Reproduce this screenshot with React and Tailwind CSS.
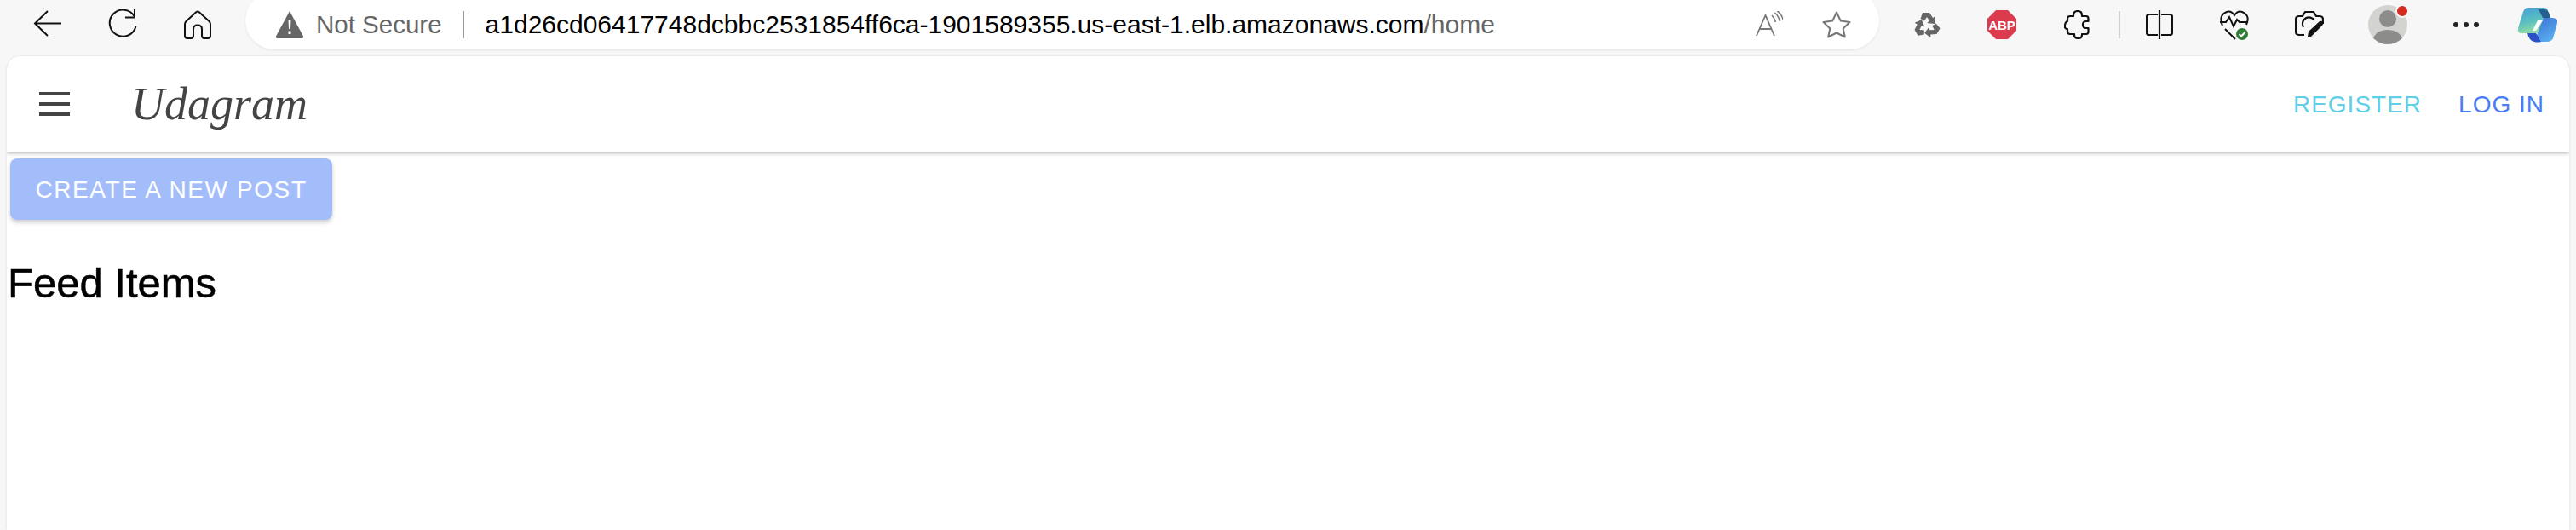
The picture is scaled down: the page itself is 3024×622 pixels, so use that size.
function Back() {
  return (
    <svg width="34" height="34" viewBox="0 0 34 34" fill="none" stroke="#111" strokeWidth="2">
      <path d="M33 15.500H2M17 1 2 15.500 17 30" />
    </svg>
  );
}

function Reload() {
  return (
    <svg width="34" height="38" viewBox="0 0 34 38" fill="none" stroke="#111" strokeWidth="2">
      <path d="M31 9.500A15.600 15.600 0 1 0 32.500 21" />
      <path d="M31 1v9.500H20" />
    </svg>
  );
}

function Home() {
  return (
    <svg width="32" height="34" viewBox="0 0 32 34" fill="none" stroke="#111" strokeWidth="2" strokeLinejoin="round">
      <path d="M14.500 2 2.500 13Q1 14.500 1 16.500V30Q1 33 4 33H8Q11 33 11 30V22Q11 17.500 16 17.500T21 22V30Q21 33 24 33H28Q31 33 31 30V16.500Q31 14.500 29.500 13L17.500 2Q16 1 14.500 2Z" />
    </svg>
  );
}

function Warning() {
  return (
    <svg width="32" height="34" viewBox="0 0 32 34">
      <path d="M16 1 32 30.500Q32.500 33 30 33H2Q-.5 33 0 30.500Z" fill="#666" />
      <path d="M14.500 11h3l-.5 11h-2zM14.500 24.500h3v3.500h-3z" fill="#fff" />
    </svg>
  );
}

function ReadAloud() {
  return (
    <svg width="32" height="32" viewBox="0 0 32 32" fill="none" stroke="#777" strokeWidth="1.800">
      <path d="M1 29 11.500 5 22 29M4.500 21h14" />
      <path d="M19 5Q22 8 23.500 13M22.500 2Q27 6 28.500 12M25.500 0Q31 4 32 10" strokeWidth="1.600" />
    </svg>
  );
}

function Star() {
  return (
    <svg width="34" height="32" viewBox="0 0 34 32" fill="none" stroke="#777" strokeWidth="2" strokeLinejoin="round">
      <path d="M17 1.500 21.800 11.500 32.500 13 24.700 20.500 26.800 30.500 17 25.500 7.200 30.500 9.300 20.500 1.500 13 12.200 11.500Z" />
    </svg>
  );
}

function Recycle() {
  const arrow = "M11 2H19L23 8 26 6 25 15 16 14 19 11.500 16 7 13 11.500 8.500 9Z";
  return (
    <svg width="32" height="32" viewBox="0 0 32 32" fill="#666">
      <path d={arrow} />
      <path d={arrow} transform="rotate(120 16 17)" />
      <path d={arrow} transform="rotate(240 16 17)" />
    </svg>
  );
}

function Abp() {
  return (
    <svg width="34" height="34" viewBox="0 0 34 34">
      <path d="M10 0h14l10 10v14L24 34H10L0 24V10Z" fill="#dc3a4d" />
      <text x="17" y="22.500" textAnchor="middle" fill="#fff" fontSize="15" fontWeight="700" fontFamily="Liberation Sans, sans-serif">ABP</text>
    </svg>
  );
}

function Puzzle() {
  return (
    <svg width="30" height="34" viewBox="0 0 30 34" fill="none" stroke="#111" strokeWidth="2.200" strokeLinejoin="round">
      <path d="M11 6Q11 1 16 1T21 6V7H26Q28.500 7 28.500 10V13H26Q22 13 22 17T26 21H28.500V25Q28.500 28 26 28H21V29Q21 33 16.500 33T12 29V28H7Q4 28 4 25V22H3Q0 21 1 17T4 13V10Q4 7 7 7H11Z" />
    </svg>
  );
}

function Split() {
  return (
    <svg width="32" height="34" viewBox="0 0 32 34" fill="none" stroke="#111" strokeWidth="2.200">
      <path d="M14 5H4Q1 5 1 8V26Q1 29 4 29H14M18 5H28Q31 5 31 8V26Q31 29 28 29H18M16 0V34" />
    </svg>
  );
}

function Health() {
  return (
    <svg width="34" height="36" viewBox="0 0 34 36" fill="none" stroke="#111" strokeWidth="2">
      <path d="M3 19Q-2 7 8 3 13 1 17 7 21 1 26 3 36 7 31 18" />
      <path d="M0 15H7L11 9 16 20 20 12 23 15H33M6 23 18 35" />
      <circle cx="26" cy="29" r="7" fill="#2f7d32" stroke="none" />
      <path d="m22.500 29 2.500 2.500 4.500-4.500" stroke="#fff" />
    </svg>
  );
}

function Capture() {
  return (
    <svg width="34" height="34" viewBox="0 0 34 34" fill="none" stroke="#111" strokeWidth="2.200">
      <path d="M11 29H5Q1 29 1 25V11Q1 7 5 7H9L12 2H22L25 7H29Q33 7 33 11V16" />
      <path d="M10 20A7.500 7.500 0 0 1 23 12" />
      <path d="m15 31 1-6 13-12q3-1 4 1t-1 4L19 31Z" fill="#111" stroke="none" />
    </svg>
  );
}

function Avatar() {
  return (
    <div className="relative w-[46px] h-[46px]">
      <svg width="46" height="46" viewBox="0 0 46 46">
        <circle cx="23" cy="23" r="23" fill="#d3d3d0" />
        <circle cx="23" cy="16" r="10" fill="#8c8c8a" />
        <path d="M6 39Q10 29 23 29T40 39Q32 46 23 46T6 39Z" fill="#8c8c8a" />
      </svg>
      <div className="absolute -top-[1px] -right-[2px] w-[12px] h-[12px] rounded-full bg-[#d62b20] border-2 border-[#f7f7f7] box-content" />
    </div>
  );
}

function Dots() {
  return (
    <div className="flex gap-[6px]">
      <div className="w-[6px] h-[6px] rounded-full bg-[#222]" />
      <div className="w-[6px] h-[6px] rounded-full bg-[#222]" />
      <div className="w-[6px] h-[6px] rounded-full bg-[#222]" />
    </div>
  );
}

function Copilot() {
  return (
    <svg width="48" height="44" viewBox="0 0 48 44">
      <defs>
        <linearGradient id="cpa" x1="0" y1="0" x2="0.300" y2="1">
          <stop offset="0" stopColor="#3f9fd8" />
          <stop offset="0.600" stopColor="#5cc0c0" />
          <stop offset="1" stopColor="#8fdca6" />
        </linearGradient>
        <linearGradient id="cpb" x1="0.200" y1="0" x2="0.800" y2="1">
          <stop offset="0" stopColor="#3f72d8" />
          <stop offset="1" stopColor="#5ab4f0" />
        </linearGradient>
      </defs>
      <path d="M12 2H30Q36 2 36 6L25 32H5Q0 32 1 26L7 7Q9 2 12 2Z" fill="url(#cpa)" />
      <path d="M24 4H32Q36 4 38 10L39 14H30L27 8Q26 5 24 4Z" fill="#245f8e" />
      <path d="M22 14H41Q48 14 47 20L42 38Q40 42 35 42H20L31 14Z" fill="url(#cpb)" />
      <path d="M12 32H22L28 42Q24 43 20 42 14 41 12 32Z" fill="#2c50c8" />
      <path d="M24 17H30L22 29H18Z" fill="#fff" />
    </svg>
  );
}

function Tool({ children, className }) {
  return <div className={"flex items-center justify-center h-[57px] shrink-0 " + className}>{children}</div>;
}

function App() {
  return (
    <div className="h-[622px] overflow-hidden bg-[#f7f7f7] flex flex-col font-['Liberation_Sans',sans-serif]">
      <div className="flex items-start h-[66px] shrink-0 pl-[12px] overflow-hidden">
        <Tool className="w-[88px]"><Back /></Tool>
        <Tool className="w-[88px]"><Reload /></Tool>
        <Tool className="w-[88px]"><Home /></Tool>
        <div className="flex items-center ml-[12px] w-[1918px] h-[68px] -mt-[10px] rounded-[34px] bg-white shadow-[0_1px_3px_rgba(0,0,0,0.08)] pl-[36px] pt-[10px] shrink-0">
          <Warning />
          <span className="ml-[15px] text-[29.500px] text-[#666] leading-none">Not Secure</span>
          <div className="ml-[24px] w-[2px] h-[32px] bg-[#999]" />
          <span className="ml-[25px] text-[30px] text-black leading-none whitespace-nowrap">
            a1d26cd06417748dcbbc2531854ff6ca-1901589355.us-east-1.elb.amazonaws.com<span className="text-[#666]">/home</span>
          </span>
          <div className="ml-auto flex items-center gap-[46px] pr-[33px]">
            <ReadAloud />
            <Star />
          </div>
        </div>
        <Tool className="w-[88px] ml-[12px]"><Recycle /></Tool>
        <Tool className="w-[88px]"><Abp /></Tool>
        <Tool className="w-[88px]"><Puzzle /></Tool>
        <div className="w-[2px] h-[32px] ml-[5px] mr-[2px] mt-[13px] bg-[#cfcfcf] shrink-0" />
        <Tool className="w-[88px]"><Split /></Tool>
        <Tool className="w-[88px]"><Health /></Tool>
        <Tool className="w-[88px]"><Capture /></Tool>
        <Tool className="w-[96px]"><Avatar /></Tool>
        <Tool className="w-[88px]"><Dots /></Tool>
        <Tool className="w-[80px]"><Copilot /></Tool>
      </div>

      <div className="flex-1 mx-[8px] bg-white rounded-t-[16px] shadow-[0_0_3px_rgba(0,0,0,0.12)] flex flex-col overflow-hidden">
        <header className="h-[112px] shrink-0 flex items-center bg-white shadow-[0_2px_5px_rgba(0,0,0,0.25)] pl-[38px] pr-[29px]">
          <svg width="40" height="28" viewBox="0 0 40 28" fill="#444">
            <path d="M0 0h36v4H0zM0 12h36v4H0zM0 24h36v4H0z" />
          </svg>
          <span className="ml-[68px] text-[54px] text-[#444] leading-none font-['Liberation_Serif',serif] italic">Udagram</span>
          <div className="ml-auto flex items-center gap-[43px] text-[28px] tracking-[1px] pt-[2px]">
            <span className="text-[#62cfe8]">REGISTER</span>
            <span className="text-[#4a7cf5]">LOG IN</span>
          </div>
        </header>
        <div className="flex flex-col items-start">
          <button className="mt-[8px] ml-[4px] w-[378px] h-[72px] pt-[2px] rounded-[8px] bg-[#a3bdfa] text-white text-[28px] tracking-[1.600px] shadow-[0_3px_5px_rgba(0,0,0,0.2)]">
            CREATE A NEW POST
          </button>
          <h1 className="mt-[50px] ml-[1px] text-[49px] leading-none text-black [-webkit-text-stroke:0.5px_black]">Feed Items</h1>
        </div>
      </div>
    </div>
  );
}

export default App;
